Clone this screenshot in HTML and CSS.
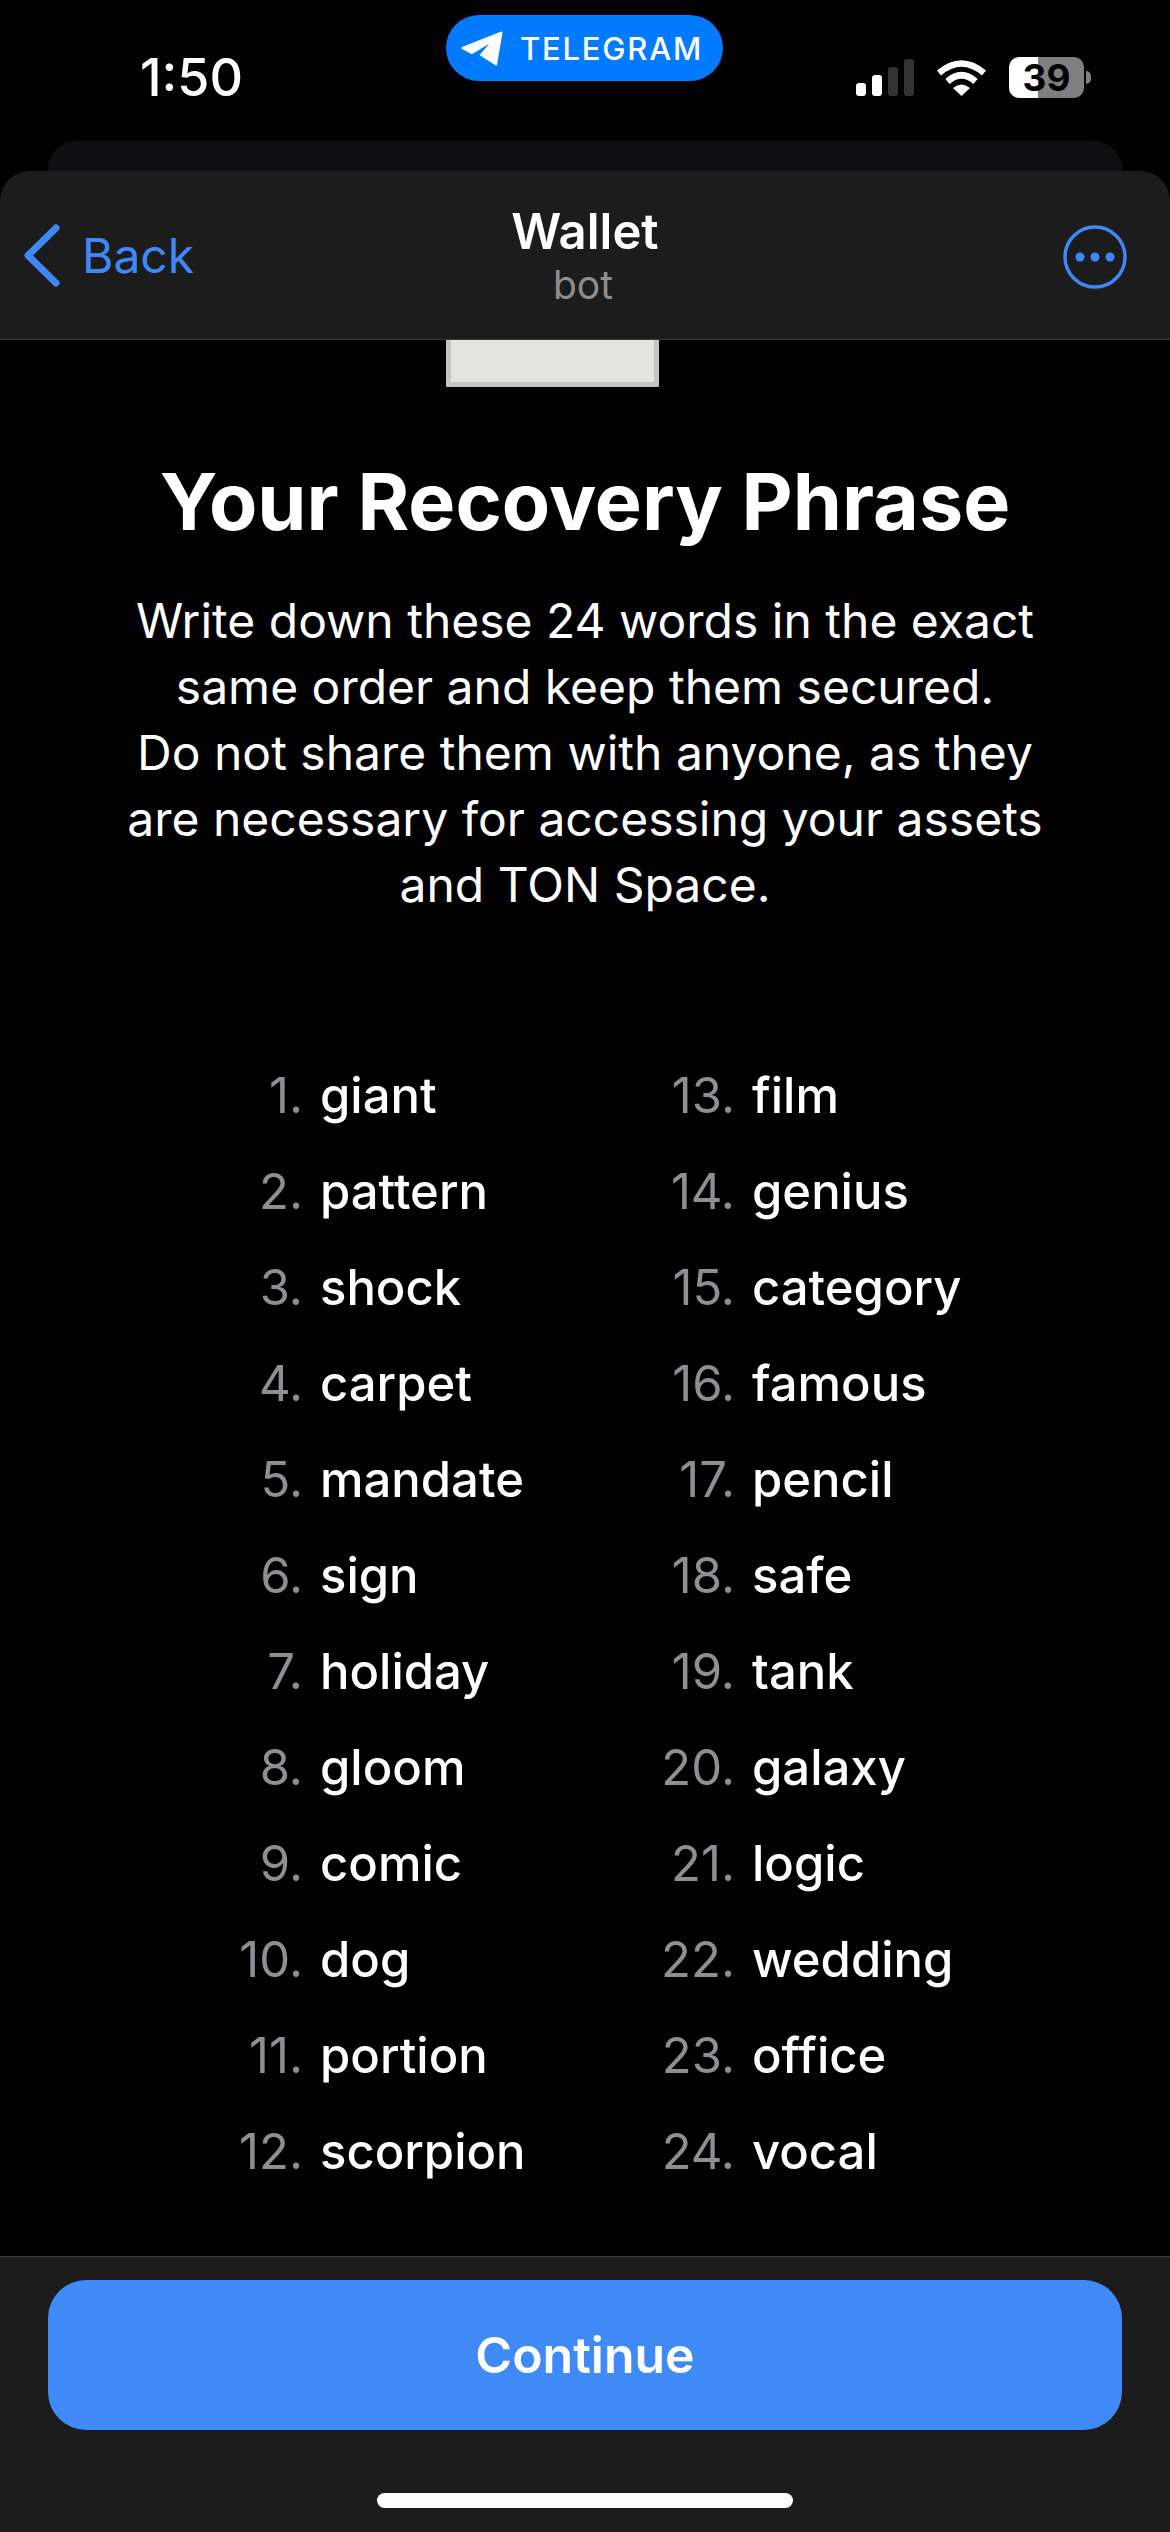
FILE: index.html
```html
<!DOCTYPE html>
<html lang="en">
  <head>
    <meta charset="UTF-8" />
    <meta name="viewport" content="width=device-width, initial-scale=1.0" />
    <title>Your Recovery Phrase</title>
    <link rel="stylesheet" href="styles.css">
  </head>
  <body>
    <div class="phone">
      <div class="status">
        <span class="time">1:50</span>
        <div class="status-icons">
          <svg class="signal" width="58" height="37" viewBox="0 0 58 37">
            <rect x="0" y="24" width="10" height="13" rx="3" fill="#fff" />
            <rect x="16" y="16" width="10" height="21" rx="3" fill="#fff" />
            <rect x="32" y="8" width="10" height="29" rx="3" fill="#333" />
            <rect x="48" y="0" width="10" height="37" rx="3" fill="#333" />
          </svg>
          <svg class="wifi" width="51" height="37" viewBox="0 0 51 37">
            <path d="M3 14 Q25.5 -5 48 14" fill="none" stroke="#fff" stroke-width="6.5" />
            <path d="M11.5 22.5 Q25.5 10 39.5 22.5" fill="none" stroke="#fff" stroke-width="6.5" />
            <path d="M17 29 Q25.5 22 34 29 L25.5 37 Z" fill="#fff" />
          </svg>
          <div class="battery">
            <span class="battery-level">39</span>
            <span class="battery-nub"></span>
          </div>
        </div>
      </div>
      <!-- telegram pill sits over the status bar -->
      <div class="pill">
        <svg width="42" height="35" viewBox="0 0 42 35">
          <path d="M1.5 17 L40.5 1.5 L35 33.5 L20 24 L33 9 L11 22 Z" fill="#fff" stroke="#fff" stroke-width="2" stroke-linejoin="round" />
        </svg>
        <span>TELEGRAM</span>
      </div>

      <div class="card-behind"></div>
      <div class="nav">
        <div class="nav-back">
          <svg width="36" height="63" viewBox="0 0 36 63">
            <path d="M32 4 L4 31.5 L32 59" fill="none" stroke="#3e88f7" stroke-width="7" stroke-linecap="round" stroke-linejoin="round" />
          </svg>
          <span>Back</span>
        </div>
        <div class="nav-title">
          <div class="nav-name">Wallet</div>
          <div class="nav-sub">bot</div>
        </div>
        <svg class="nav-more" width="64" height="64" viewBox="0 0 64 64">
          <circle cx="32" cy="32" r="30" fill="none" stroke="#3e88f7" stroke-width="3.5" />
          <circle cx="17" cy="32" r="4.5" fill="#3e88f7" />
          <circle cx="32" cy="32" r="4.5" fill="#3e88f7" />
          <circle cx="47" cy="32" r="4.5" fill="#3e88f7" />
        </svg>
      </div>

      <div class="content">
        <div class="sticker"></div>
        <h1>Your Recovery Phrase</h1>
        <p class="intro">
          Write down these 24 words in the exact<br />
          same order and keep them secured.<br />
          Do not share them with anyone, as they<br />
          are necessary for accessing your assets<br />
          and TON Space.
        </p>
        <ol class="words">
          <li><span class="num">1.</span><span>giant</span></li>
          <li><span class="num">2.</span><span>pattern</span></li>
          <li><span class="num">3.</span><span>shock</span></li>
          <li><span class="num">4.</span><span>carpet</span></li>
          <li><span class="num">5.</span><span>mandate</span></li>
          <li><span class="num">6.</span><span>sign</span></li>
          <li><span class="num">7.</span><span>holiday</span></li>
          <li><span class="num">8.</span><span>gloom</span></li>
          <li><span class="num">9.</span><span>comic</span></li>
          <li><span class="num">10.</span><span>dog</span></li>
          <li><span class="num">11.</span><span>portion</span></li>
          <li><span class="num">12.</span><span>scorpion</span></li>
          <li><span class="num">13.</span><span>film</span></li>
          <li><span class="num">14.</span><span>genius</span></li>
          <li><span class="num">15.</span><span>category</span></li>
          <li><span class="num">16.</span><span>famous</span></li>
          <li><span class="num">17.</span><span>pencil</span></li>
          <li><span class="num">18.</span><span>safe</span></li>
          <li><span class="num">19.</span><span>tank</span></li>
          <li><span class="num">20.</span><span>galaxy</span></li>
          <li><span class="num">21.</span><span>logic</span></li>
          <li><span class="num">22.</span><span>wedding</span></li>
          <li><span class="num">23.</span><span>office</span></li>
          <li><span class="num">24.</span><span>vocal</span></li>
        </ol>
      </div>

      <div class="footer">
        <button class="continue">Continue</button>
        <div class="home-bar"></div>
      </div>
    </div>
  </body>
</html>
```

FILE: styles.css
```css
html,
body {
  margin: 0;
  padding: 0;
  background-color: #000;
}
body {
  font-family: Inter, "Noto Sans", sans-serif;
  color: #fff;
}
.phone {
  position: relative;
  height: 2532px;
  display: flex;
  flex-direction: column;
  overflow: hidden;
}

/* status bar */
.status {
  height: 141px;
  flex: none;
  display: flex;
  justify-content: space-between;
  align-items: flex-start;
  padding: 57px 79px 0 140px;
  box-sizing: border-box;
}
.time {
  font-size: 52px;
  line-height: 42px;
  font-weight: 500;
}
.status-icons {
  display: flex;
  align-items: center;
  gap: 22px;
  height: 41px;
}
.battery {
  display: flex;
  align-items: center;
  gap: 2px;
}
.battery-level {
  width: 75px;
  height: 41px;
  border-radius: 10px;
  background: linear-gradient(90deg, #fff 0, #fff 29px, #7f7f7f 29px);
  color: #000;
  font-size: 37px;
  font-weight: 700;
  line-height: 41px;
  text-align: center;
}
.battery-nub {
  width: 5px;
  height: 13px;
  background-color: #7f7f7f;
  border-radius: 0 5px 5px 0;
}
.pill {
  position: absolute;
  top: 15px;
  left: 446px;
  width: 277px;
  height: 66px;
  border-radius: 33px;
  background-color: #007aff;
  display: flex;
  align-items: center;
  gap: 17px;
  padding-left: 15px;
  box-sizing: border-box;
  font-size: 31px;
  font-weight: 500;
  letter-spacing: 1.8px;
}

/* nav */
.card-behind {
  height: 30px;
  flex: none;
  margin: 0 48px;
  background-color: #101012;
  border-radius: 28px 28px 0 0;
}
.nav {
  height: 169px;
  flex: none;
  display: flex;
  align-items: center;
  justify-content: space-between;
  position: relative;
  padding: 0 43px 0 24px;
  box-sizing: border-box;
  background-color: #1c1c1c;
  border-bottom: 1px solid #3a3a3a;
  border-radius: 30px 30px 0 0;
}
.nav-back {
  display: flex;
  align-items: center;
  gap: 22px;
  color: #3e88f7;
  font-size: 48px;
}
.nav-more {
  margin-top: 4px;
}
.nav-title {
  position: absolute;
  left: 0;
  right: 0;
  top: 30px;
  text-align: center;
}
.nav-name {
  font-size: 49px;
  line-height: 62px;
  font-weight: 600;
}
.nav-sub {
  font-size: 39px;
  line-height: 44px;
  margin-right: 4px;
  color: #8e8e90;
}

/* content */
.content {
  flex: 1;
  display: flex;
  flex-direction: column;
  align-items: center;
  text-align: center;
}
.sticker {
  width: 213px;
  height: 47px;
  margin-right: 66px;
  box-sizing: border-box;
  background-color: #e3e3e1;
  border: 5px solid #c4c4c2;
  border-top: none;
  border-radius: 0 0 2px 2px;
}
h1 {
  margin: 66px 0 0;
  font-size: 79px;
  line-height: 96px;
  font-weight: 700;
}
.intro {
  margin: 39px 0 0;
  font-size: 48px;
  line-height: 66px;
}
.words {
  list-style: none;
  margin: 129px 0 0;
  padding: 0 0 0 203px;
  align-self: stretch;
  display: grid;
  grid-template-rows: repeat(12, 96px);
  grid-template-columns: 432px 432px;
  grid-auto-flow: column;
  text-align: left;
  font-size: 49px;
  font-weight: 500;
}
.words li {
  display: flex;
  align-items: center;
  gap: 17px;
}
.num {
  width: 100px;
  text-align: right;
  font-weight: 400;
  color: #8e8e93;
}

/* footer */
.footer {
  height: 276px;
  flex: none;
  box-sizing: border-box;
  background-color: #1c1c1c;
  border-top: 1px solid #3a3a3a;
  padding: 23px 48px 0;
}
.continue {
  display: block;
  width: 100%;
  height: 150px;
  border: none;
  border-radius: 38px;
  background-color: #3f8af7;
  color: #fff;
  font-family: inherit;
  font-size: 50px;
  font-weight: 600;
}
.home-bar {
  width: 416px;
  height: 15px;
  margin: 63px auto 0;
  background-color: #fff;
  border-radius: 8px;
}
```
